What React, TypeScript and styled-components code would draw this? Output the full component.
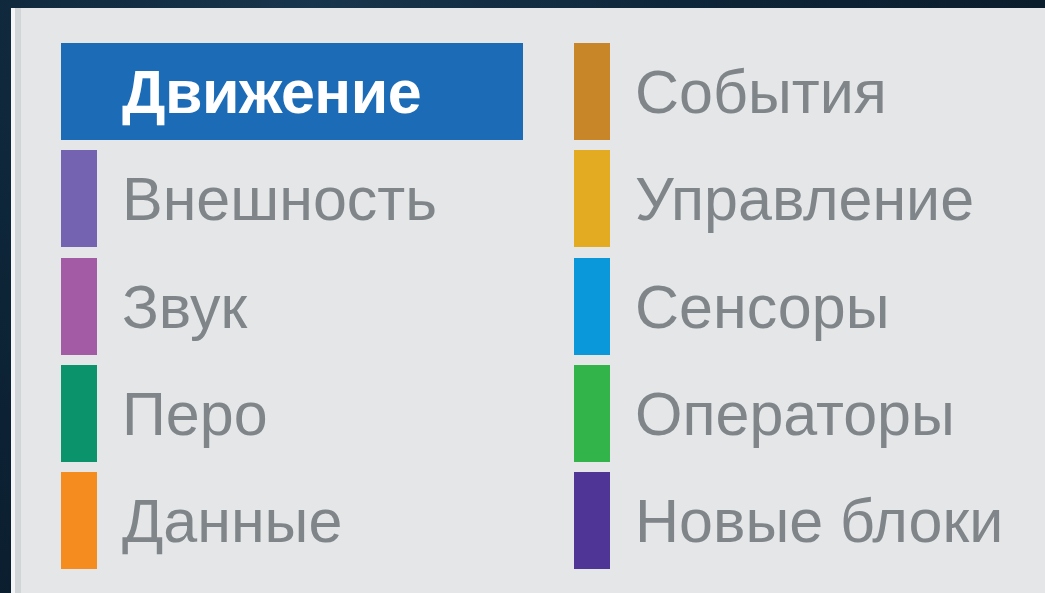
import styled, { createGlobalStyle } from "styled-components";
import { useState } from "react";

const GlobalStyle = createGlobalStyle`
  html, body {
    margin: 0;
    padding: 0;
    background: #0c2133;
  }
  body {
    font-family: "Liberation Sans", Arial, sans-serif;
  }
`;

const Screen = styled.div`
  width: 1045px;
  height: 593px;
  overflow: hidden;
  padding: 8px 0 0 11px;
  box-sizing: border-box;
  background: radial-gradient(circle at 30% 0%, #17354d 0%, #0d2437 45%, #081826 100%);
`;

const Palette = styled.div`
  height: 100%;
  box-sizing: border-box;
  background: #e4e6e7;
  border-left: 4px solid #f3f5f6;
  box-shadow: inset 6px 0 0 #d2d5d7;
  padding: 35px 0 0 46px;
  display: grid;
  grid-template-columns: 462px 440px;
  grid-auto-rows: 97px;
  column-gap: 51px;
  row-gap: 10.3px;
  grid-auto-flow: column;
  grid-template-rows: repeat(5, 97px);
  align-content: start;
`;

const Category = styled.div<{ $active?: boolean; $color: string }>`
  display: flex;
  align-items: center;
  gap: 25px;
  cursor: pointer;
  background: ${(p) => (p.$active ? p.$color : "transparent")};
  color: ${(p) => (p.$active ? "#ffffff" : "#80858a")};
  font-size: 61px;
  font-weight: ${(p) => (p.$active ? 700 : 400)};
  letter-spacing: ${(p) => (p.$active ? "-0.5px" : "0")};
  white-space: nowrap;
`;

const Bar = styled.span<{ $color: string }>`
  width: 36px;
  height: 100%;
  flex: none;
  background: ${(p) => p.$color};
`;

const Label = styled.span`
  line-height: 1;
  padding-top: 2px;
`;

const categories = [
  { name: "Движение", color: "#1b6bb7" },
  { name: "Внешность", color: "#7463b0" },
  { name: "Звук", color: "#a35ba5" },
  { name: "Перо", color: "#0b936c" },
  { name: "Данные", color: "#f48c1f" },
  { name: "События", color: "#c98629" },
  { name: "Управление", color: "#e2ab22" },
  { name: "Сенсоры", color: "#0a98db" },
  { name: "Операторы", color: "#33b44a" },
  { name: "Новые блоки", color: "#4f3595" },
];

const App = () => {
  const [current, setCurrent] = useState("Движение");

  return (
    <>
      <GlobalStyle />
      <Screen>
        <Palette>
          {categories.map((item) => (
            <Category
              key={item.name}
              $color={item.color}
              $active={item.name === current}
              onClick={() => setCurrent(item.name)}
            >
              <Bar $color={item.color} />
              <Label>{item.name}</Label>
            </Category>
          ))}
        </Palette>
      </Screen>
    </>
  );
};

export default App;
